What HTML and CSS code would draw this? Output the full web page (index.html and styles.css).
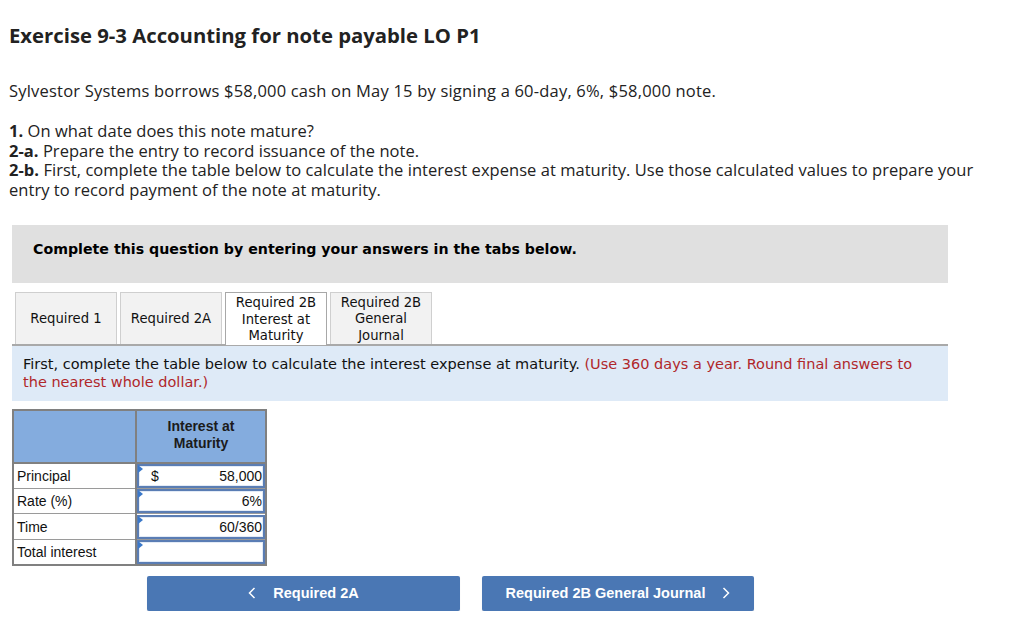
FILE: index.html
```html
<!DOCTYPE html>
<html>
<head>
<meta charset="utf-8">
<link rel="stylesheet" href="styles.css">
</head>
<body>
<div class="page">
  <h1 class="title">Exercise 9-3 Accounting for note payable LO P1</h1>
  <p class="intro">Sylvestor Systems borrows $58,000 cash on May 15 by signing a 60-day, 6%, $58,000 note.</p>
  <div class="reqs">
    <div><b>1.</b> On what date does this note mature?</div>
    <div><b>2-a.</b> Prepare the entry to record issuance of the note.</div>
    <div><b>2-b.</b> First, complete the table below to calculate the interest expense at maturity. Use those calculated values to prepare your entry to record payment of the note at maturity.</div>
  </div>

  <div class="notice">Complete this question by entering your answers in the tabs below.</div>

  <div class="tabs">
    <div class="tab">Required 1</div>
    <div class="tab">Required 2A</div>
    <div class="tab active">Required 2B<br>Interest at<br>Maturity</div>
    <div class="tab">Required 2B<br>General<br>Journal</div>
  </div>
  <div class="info">First, complete the table below to calculate the interest expense at maturity. <span class="red">(Use 360 days a year. Round final answers to the nearest whole dollar.)</span></div>

  <table class="calc">
    <tr class="head">
      <th class="c1"></th>
      <th class="c2">Interest at<br>Maturity</th>
    </tr>
    <tr>
      <td class="c1">Principal</td>
      <td class="c2"><div class="inp"><span class="cur">$</span><span class="val">58,000</span></div></td>
    </tr>
    <tr>
      <td class="c1">Rate (%)</td>
      <td class="c2"><div class="inp"><span class="val">6%</span></div></td>
    </tr>
    <tr>
      <td class="c1">Time</td>
      <td class="c2"><div class="inp"><span class="val">60/360</span></div></td>
    </tr>
    <tr>
      <td class="c1">Total interest</td>
      <td class="c2"><div class="inp"><span class="val"></span></div></td>
    </tr>
  </table>

  <div class="nav">
    <div class="btn prev"><svg class="chev" width="8" height="12" viewBox="0 0 8 12"><polyline points="6.5,1 1.5,6 6.5,11" fill="none" stroke="#ffffff" stroke-width="1.5"/></svg>Required 2A</div>
    <div class="btn next">Required 2B General Journal<svg class="chev" width="8" height="12" viewBox="0 0 8 12"><polyline points="1.5,1 6.5,6 1.5,11" fill="none" stroke="#ffffff" stroke-width="1.5"/></svg></div>
  </div>
</div>
</body>
</html>
```

FILE: styles.css
```css
html, body {
  margin: 0;
  padding: 0;
  background: #ffffff;
}

.page {
  padding: 0 0 0 9px;
  width: 966px;
  font-family: "Open Sans", "Liberation Sans", sans-serif;
  color: #222222;
}

.title {
  margin: 0;
  padding-top: 22px;
  font-size: 20.3px;
  line-height: 26px;
  font-weight: 700;
  color: #222222;
}

.intro {
  margin: 0;
  padding-top: 32px;
  font-size: 16.5px;
  letter-spacing: 0.2px;
  line-height: 22px;
}

.reqs {
  padding-top: 19px;
  font-size: 16.5px;
  letter-spacing: 0.04px;
  line-height: 19.7px;
}

.reqs b {
  font-weight: 700;
}

.notice {
  margin: 25px 0 0 3px;
  width: 936px;
  height: 58px;
  box-sizing: border-box;
  padding: 15px 0 0 21px;
  background: #e0e0e0;
  font-family: "DejaVu Sans", Verdana, sans-serif;
  font-weight: 700;
  font-size: 14.2px;
  line-height: 18px;
  color: #000000;
}

.tabs {
  display: flex;
  gap: 3px;
  margin: 9px 0 0 6px;
  align-items: flex-end;
}

.tab {
  width: 102px;
  height: 52px;
  box-sizing: border-box;
  border: 1px solid #cfcfcf;
  border-bottom: none;
  background: #f2f2f2;
  display: flex;
  align-items: center;
  justify-content: center;
  text-align: center;
  font-family: "DejaVu Sans", Verdana, sans-serif;
  font-size: 13.2px;
  line-height: 16.5px;
  color: #111111;
  padding-top: 2px;
}

.tab.active {
  background: #ffffff;
  border-color: #a8a8a8;
  height: 53px;
  margin-bottom: -1px;
  position: relative;
}

.info {
  margin-left: 3px;
  width: 936px;
  box-sizing: border-box;
  border-top: 2px solid #a9a9a9;
  background: #deeaf7;
  padding: 9px 20px 10px 11px;
  font-family: "DejaVu Sans", Verdana, sans-serif;
  font-size: 14.5px;
  line-height: 18px;
  color: #111111;
}

.red {
  color: #b0272a;
}

.calc {
  margin: 8px 0 0 3px;
  border-collapse: collapse;
  table-layout: fixed;
  width: 255px;
  border: 2px solid #808080;
  font-family: "Liberation Sans", Arial, sans-serif;
  font-size: 14px;
  color: #111111;
}

.calc th, .calc td {
  padding: 0;
}

.calc .head th {
  background: #84acde;
  height: 53px;
  box-sizing: border-box;
  font-weight: 700;
  font-size: 14px;
  line-height: 17px;
  vertical-align: middle;
  padding-bottom: 2px;
  color: #1b1b1b;
  border-bottom: 2px solid #808080;
}

.calc th.c1 {
  border-right: 2px solid #808080;
}

.calc .c1 {
  width: 123px;
}

.calc td {
  height: 25.5px;
  box-sizing: border-box;
}

.calc td.c1 {
  padding-left: 3px;
  border-top: 1px solid #9a9a9a;
  border-bottom: 1px solid #9a9a9a;
  border-right: 2px solid #808080;
}

.calc td.c2 {
  padding: 0;
  background: #ffffff;
  border-top: 1px solid #9a9a9a;
}

.inp {
  position: relative;
  height: 24px;
  box-sizing: border-box;
  border: 2px solid #5a7db4;
  box-shadow: inset 0 0 0 1px #e3ebf6;
  display: flex;
  align-items: center;
  padding: 0 1px 0 12px;
}

.inp::before {
  content: "";
  position: absolute;
  left: -1px;
  top: -1px;
  border-left: 5px solid #3a78c9;
  border-top: 4px solid transparent;
  border-bottom: 4px solid transparent;
}

.cur {
  flex: none;
}

.val {
  flex: 1;
  text-align: right;
}

.nav {
  display: flex;
  gap: 22px;
  margin: 10px 0 0 138px;
}

.btn {
  height: 35px;
  background: #4a77b4;
  border-radius: 2px;
  color: #ffffff;
  font-family: "Liberation Sans", Arial, sans-serif;
  font-weight: 700;
  font-size: 14.5px;
  display: flex;
  align-items: center;
  justify-content: center;
  box-shadow: 0 1px 1px rgba(0,0,0,0.15);
}

.btn.prev {
  width: 313px;
}

.btn.next {
  width: 272px;
}

.chev {
  display: block;
  flex: none;
}

.prev .chev {
  margin-right: 17px;
}

.next .chev {
  margin-left: 17px;
}
```
